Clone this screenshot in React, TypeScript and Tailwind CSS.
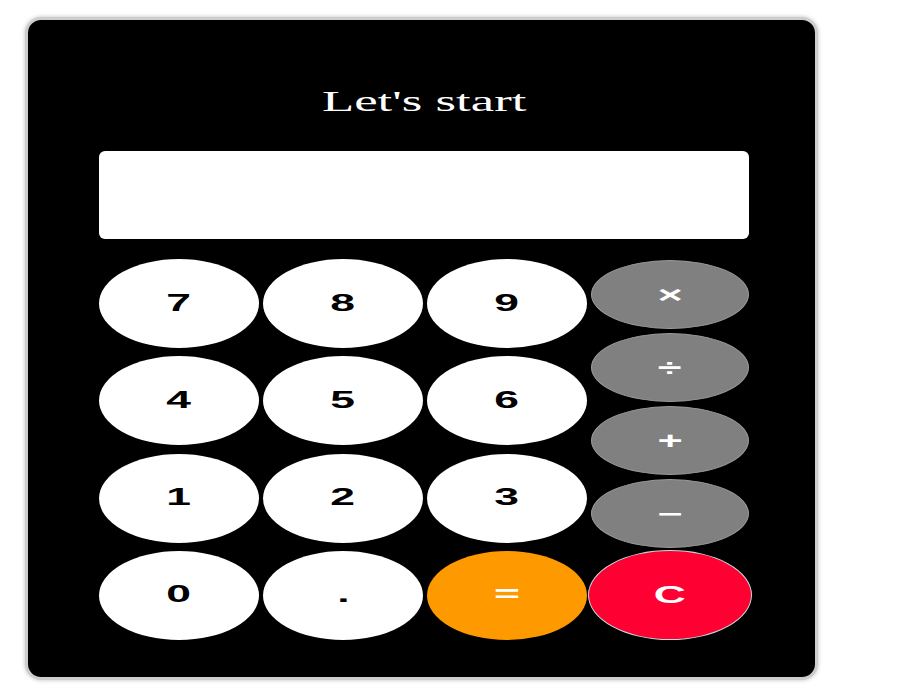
import React, { useState } from 'react';

// reference is stretched sideways, so labels get a matching scale-x

const digits = ['7', '8', '9', '4', '5', '6', '1', '2', '3', '0', '.'];
const ops = ['×', '÷', '+', '−'];

export default function App() {
  const [display, setDisplay] = useState<string>('');

  const press = (key: string) => {
    setDisplay((prev) => prev + key);
  };

  return (
    <div className="bg-white w-[900px] h-[700px] pt-[17px] pl-[25px]">
      <div className="w-[793px] h-[663px] bg-black border-[3px] border-[#cdcdcd] rounded-[16px] shadow-[0_0_4px_rgba(0,0,0,0.25)] pl-[71px] pt-[65px]">
        <h1 className="w-[650px] text-center text-white text-[29px] leading-[33px] font-normal font-['Liberation_Serif',serif]">
          <span className="inline-block scale-x-[1.82]">Let's start</span>
        </h1>

        <div className="mt-[33px] w-[650px] h-[88px] bg-white rounded-[6px] flex items-center justify-end px-4 text-[28px] font-['Liberation_Sans',sans-serif] text-black">
          {display}
        </div>

        <div className="mt-[20px] flex gap-[4px] w-[650px] font-['Liberation_Sans',Arial,sans-serif] font-bold text-[24px]">
          <div className="grid grid-cols-3 gap-x-[4px] gap-y-[8px] w-[488px]">
            {digits.map((d) => (
              <button
                key={d}
                onClick={() => press(d)}
                className="h-[89px] rounded-[50%] bg-white text-black flex items-center justify-center pb-[2px]"
              >
                <span className="inline-block scale-x-[1.85]">{d}</span>
              </button>
            ))}
            <button
              onClick={() => setDisplay('')}
              className="h-[89px] rounded-[50%] bg-[#ff9900] text-white flex items-center justify-center pb-[2px]"
            >
              <span className="inline-block scale-x-[1.85]">=</span>
            </button>
          </div>

          <div className="flex flex-col gap-[4px] w-[158px] pt-[1px]">
            {ops.map((o) => (
              <button
                key={o}
                onClick={() => press(o)}
                className="h-[69px] rounded-[50%] bg-[#808080] border border-[#9a9a9a] text-white flex items-center justify-center"
              >
                <span className="inline-block scale-x-[1.8]">{o}</span>
              </button>
            ))}
            <button
              onClick={() => setDisplay('')}
              className="-mt-[2px] -ml-[3px] w-[164px] h-[90px] rounded-[50%] bg-[#ff0033] border-[1.5px] border-[#c4dada] text-white flex items-center justify-center"
            >
              <span className="inline-block scale-x-[1.85]">C</span>
            </button>
          </div>
        </div>
      </div>
    </div>
  );
}
